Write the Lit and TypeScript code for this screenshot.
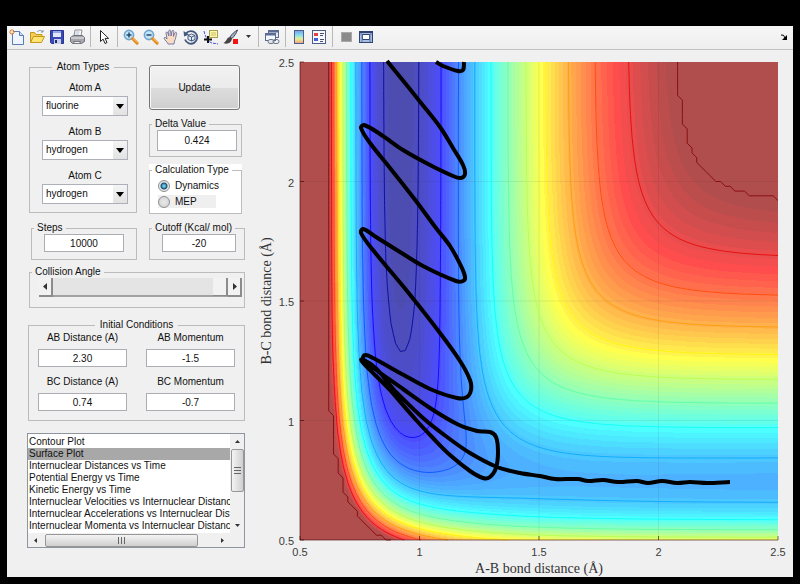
import { LitElement, html, svg, css, TemplateResult } from "lit";
import { customElement, state } from "lit/decorators.js";

/* ---------- Potential energy surface (LEPS, collinear F + H2) ---------- */

type Bond = { d: number; beta: number; re: number };
const HF: Bond = { d: 141.2, beta: 2.203, re: 0.917 };
const HH: Bond = { d: 109.5, beta: 1.942, re: 0.7419 };
const DELTA = 0.424;

const SIZE = 478;
const R_MIN = 0.5;
const R_MAX = 2.5;
const GRID = 101;
const CUTOFF = -20;
const PLATEAU = -22;
const V_MIN = -141;

function integrals(b: Bond, r: number): [number, number] {
  const s = DELTA * DELTA;
  const e = Math.exp(-b.beta * (r - b.re));
  const k = b.d / (4 * (1 + s));
  return [
    k * ((3 + s) * e * e - (2 + 6 * s) * e),
    k * ((1 + 3 * s) * e * e - (6 + 2 * s) * e),
  ];
}

function energy(ab: number, bc: number): number {
  const [q1, j1] = integrals(HF, ab);
  const [q2, j2] = integrals(HH, bc);
  const [q3, j3] = integrals(HF, ab + bc);
  const root = Math.sqrt(((j1 - j2) ** 2 + (j2 - j3) ** 2 + (j3 - j1) ** 2) / 2);
  const v = q1 + q2 + q3 - root;
  return v > PLATEAU ? CUTOFF : v;
}

const surface: number[][] = Array.from({ length: GRID }, (_, row) =>
  Array.from({ length: GRID }, (_, col) =>
    energy(
      R_MIN + ((R_MAX - R_MIN) * col) / (GRID - 1),
      R_MAX - ((R_MAX - R_MIN) * row) / (GRID - 1),
    ),
  ),
);

/* Traces {V >= level}. With closed = true the region is sealed along the frame. */
function trace(level: number, closed: boolean): string {
  const lo = closed ? -1 : 0;
  const hi = closed ? GRID : GRID - 1;
  const clamp = (n: number) => Math.max(0, Math.min(GRID - 1, n));
  const inside = (r: number, c: number) =>
    r >= 0 && c >= 0 && r < GRID && c < GRID && surface[r][c] >= level;
  const value = (r: number, c: number) =>
    r >= 0 && c >= 0 && r < GRID && c < GRID ? surface[r][c] : -1e6;
  const step = SIZE / (GRID - 1);
  const next = new Map<string, string>();
  const points = new Map<string, string>();
  const ends = new Set<string>();

  for (let r = lo; r < hi; r++) {
    for (let c = lo; c < hi; c++) {
      const ring = [[r, c], [r, c + 1], [r + 1, c + 1], [r + 1, c]];
      const flags = ring.map(([a, b]) => inside(a, b));
      if (flags.every(Boolean) || !flags.some(Boolean)) continue;
      const key = (i: number) => {
        const p = ring[i];
        const q = ring[(i + 1) % 4];
        const [m, n] = p[0] < q[0] || p[1] < q[1] ? [p, q] : [q, p];
        const id = `${m}|${n}`;
        if (!points.has(id)) {
          const vm = value(m[0], m[1]);
          const vn = value(n[0], n[1]);
          const t = (level - vm) / (vn - vm);
          const y = clamp(m[0]) + t * (clamp(n[0]) - clamp(m[0]));
          const x = clamp(m[1]) + t * (clamp(n[1]) - clamp(m[1]));
          points.set(id, `${(x * step).toFixed(1)} ${(y * step).toFixed(1)}`);
        }
        return id;
      };
      for (let i = 0; i < 4; i++) {
        if (flags[i] && !flags[(i + 1) % 4]) {
          let k = (i + 1) % 4;
          while (!(!flags[k] && flags[(k + 1) % 4])) k = (k + 1) % 4;
          const to = key(k);
          next.set(key(i), to);
          ends.add(to);
        }
      }
    }
  }

  let path = "";
  const walk = (start: string) => {
    let at: string | undefined = start;
    path += `M${points.get(start)}`;
    while (at !== undefined && next.has(at)) {
      const to: string = next.get(at)!;
      next.delete(at);
      path += `L${points.get(to)}`;
      at = to;
    }
  };
  for (const k of [...next.keys()]) if (!ends.has(k)) walk(k);
  for (const k of [...next.keys()]) if (next.has(k)) walk(k);
  return path;
}

function jet(t: number): number[] {
  const ch = (centre: number) =>
    Math.max(0, Math.min(1, 1.5 - Math.abs(4 * t - centre)));
  return [ch(3), ch(2), ch(1)];
}
const rgb = (c: number[], white: number) =>
  `rgb(${c.map((v) => Math.round(255 * (v * (1 - white) + white))).join(",")})`;

const BANDS = 64;
const bands = Array.from({ length: BANDS }, (_, i) => ({
  d: trace(i === BANDS - 1 ? CUTOFF : V_MIN + ((i + 1) * (CUTOFF - V_MIN)) / BANDS, true),
  fill: rgb(jet(Math.min(0.985, (i + 2) / BANDS)), 0.3),
}));

const contours = Array.from({ length: 12 }, (_, k) => {
  const level = k === 0 ? CUTOFF : -(21.9 + 10.5 * k);
  return { d: trace(level, false), stroke: rgb(jet((level - V_MIN) / (CUTOFF - V_MIN)), 0) };
});

/* ---------- Trajectory ---------- */

const paths: number[][][] = [
  [[136, 0], [143, 4], [158, 9], [163, 8], [164, 0]],
  [
    [87, -1], [105, 21], [121, 41], [140, 65], [153, 86], [163, 103], [165, 112],
    [161, 116], [153, 114], [130, 103], [103, 88], [80, 72], [64, 63], [61, 66],
    [70, 81], [90, 106], [116, 139], [136, 166], [150, 184], [161, 204], [165, 215],
    [163, 219], [156, 219], [123, 204], [100, 190], [76, 175], [63, 167], [61, 171],
    [73, 188], [107, 229], [140, 271], [160, 299], [170, 318], [171, 328], [167, 335],
    [157, 336], [130, 327], [100, 311], [73, 296], [65, 293], [63, 297], [68, 302],
    [103, 327], [130, 346], [157, 362], [177, 369], [190, 370], [196, 375], [198, 390],
    [196, 406], [190, 415], [183, 416], [170, 409], [150, 393], [133, 376], [117, 359],
    [90, 328], [64, 298], [97, 331], [123, 356], [147, 375], [170, 391], [197, 405],
    [220, 411], [240, 414], [255, 417], [278, 417], [288, 419], [303, 418], [318, 420],
    [337, 419], [348, 421], [362, 419], [377, 421], [390, 420], [407, 421], [430, 420],
  ],
];

function smooth(p: number[][]): string {
  let d = `M${p[0].join(" ")}`;
  for (let i = 0; i < p.length - 1; i++) {
    const a = p[Math.max(0, i - 1)];
    const b = p[i];
    const c = p[i + 1];
    const e = p[Math.min(p.length - 1, i + 2)];
    const len = Math.hypot(c[0] - b[0], c[1] - b[1]);
    const tangent = (u: number[], v: number[]) => {
      const l = Math.hypot(v[0] - u[0], v[1] - u[1]) || 1;
      return [((v[0] - u[0]) / l) * (len / 3), ((v[1] - u[1]) / l) * (len / 3)];
    };
    const t1 = tangent(a, c);
    const t2 = tangent(b, e);
    d += `C${[b[0] + t1[0], b[1] + t1[1], c[0] - t2[0], c[1] - t2[1], c[0], c[1]]
      .map((n) => n.toFixed(1))
      .join(" ")}`;
  }
  return d;
}

const ticks = [0.5, 1, 1.5, 2, 2.5].map((v) => ({ v, at: ((v - R_MIN) / 2) * SIZE }));

@customElement("energy-plot")
export class EnergyPlot extends LitElement {
  static styles = css`
    :host { display: block; }
    svg { display: block; width: 100%; height: auto; }
    .tick { font: 11px "Liberation Sans", Arial, sans-serif; fill: #3c3c3c; }
    .axis { font: 14px "Liberation Serif", "Times New Roman", serif; fill: #333; }
    .contour { fill: none; stroke-width: 1; opacity: 0.8; }
    .grid { stroke: #262626; opacity: 0.08; }
    .frame { stroke: #400000; fill: none; opacity: 0.6; }
    .path { fill: none; stroke: #000; stroke-width: 4; stroke-linejoin: round; }
    .band { shape-rendering: crispEdges; }
  `;

  render() {
    return html`
      <svg viewBox="-53 -12 546 527" role="img" aria-label="Potential energy surface with trajectory">
        <rect width=${SIZE} height=${SIZE} fill=${rgb([0, 0, 0.5625], 0.3)}></rect>
        ${bands.map((b) => svg`<path class="band" d=${b.d} fill=${b.fill} fill-rule="evenodd"></path>`)}
        ${ticks.slice(1, 4).map(
          (t) => svg`<path class="grid" d="M${t.at} 0V${SIZE}M0 ${SIZE - t.at}H${SIZE}"></path>`,
        )}
        ${contours.map((c) => svg`<path class="contour" d=${c.d} stroke=${c.stroke}></path>`)}
        <path class="frame" d="M0 0V478M0 478H478"></path>
        ${ticks.map(
          (t) => svg`<path class="frame" d="M${t.at} 478v-4M0 ${SIZE - t.at}h4"></path>
            <text class="tick" x=${t.at} y="494" text-anchor="middle">${t.v}</text>
            <text class="tick" x="-6" y=${SIZE - t.at + 5} text-anchor="end">${t.v}</text>`,
        )}
        ${paths.map((p) => svg`<path class="path" d=${smooth(p)}></path>`)}
        <text class="axis" x="239" y="511" text-anchor="middle">A-B bond distance (Å)</text>
        <text class="axis" transform="translate(-29 239) rotate(-90)" text-anchor="middle">B-C bond distance (Å)</text>
      </svg>
    `;
  }
}

/* ---------- Toolbar ---------- */

const handle = svg`<path d="M9.5 9.5l4.6 4.6" stroke="#e08a1e" stroke-width="3" stroke-linecap="round"></path><path d="M10 9.3l4.4 4.4" stroke="#ffc56b" stroke-width="1"></path>`;
const lens = svg`<circle cx="6" cy="6" r="4.6" fill="#c4e4f8" stroke="#6fa5cf" stroke-width="1.6"></circle>`;

const icons: Record<string, TemplateResult> = {
  "New Figure": svg`<path d="M3.5 2.500h7l4 4v9h-11z" fill="#eef5ff" stroke="#5a7cb4"></path><path d="M10.500 2.500v4h4" fill="#c9dcf5" stroke="#5a7cb4"></path><path d="M3 0v6M0 3h6M1 1l4 4M5 1l-4 4" stroke="#e0763a" stroke-width="1"></path><circle cx="3" cy="3" r="1.200" fill="#ffe9a0"></circle>`,
  "Open File": svg`<path d="M1.500 13.500v-10h4l1.500 2h6v3" fill="#f3cd55" stroke="#c4971d"></path><path d="M1.500 13.500l3-6h11l-3 6z" fill="#ffe373" stroke="#c4971d"></path><path d="M8 3c2-2 4-2 6 0m0-2v2h-2" fill="none" stroke="#7b93b5"></path>`,
  "Save Figure": svg`<path d="M1.500 1.500h13v13h-12l-1-1z" fill="#3a49b5" stroke="#2b3590"></path><rect x="4" y="2" width="8" height="6" fill="#dfe7f8"></rect><rect x="4" y="2" width="8" height="2" fill="#91a8e6"></rect><rect x="5" y="10" width="7" height="5" fill="#cbd1e4"></rect><rect x="6" y="11" width="2" height="3" fill="#20287a"></rect>`,
  "Print Figure": svg`<path d="M5 7l1-6h7l-1 6z" fill="#fff" stroke="#8d8d8d"></path><path d="M6.500 3h4M6.300 5h4" stroke="#a9bbd6"></path><path d="M1.500 8.500l3-2h9l2 2v4l-3 2h-9l-2-2z" fill="#a4a7ad" stroke="#6e7074"></path><path d="M2 9h13" stroke="#eee"></path><path d="M4.500 12.500h7l-1 2h-5z" fill="#f6f6f6" stroke="#77797c"></path>`,
  "Edit Plot": svg`<path d="M4.500 1.500v11l2.600-2.400 1.900 4.400 2-.9-1.900-4.200h3.500z" fill="#fff" stroke="#222"></path>`,
  "Zoom In": svg`${lens}${handle}<path d="M3.500 6h5M6 3.500v5" stroke="#27496f" stroke-width="1.500"></path>`,
  "Zoom Out": svg`${lens}${handle}<path d="M3.500 6h5" stroke="#27496f" stroke-width="1.500"></path>`,
  Pan: svg`<path d="M5 15c-.5-2-3.500-4-4-6 .5-1.200 2-.5 3 1L3 4c0-1.400 1.500-1.400 1.900 0l1 3-.2-5c.2-1.300 1.700-1.300 1.900 0l.5 5 .9-5c.4-1.200 1.800-.9 1.800.4l-.4 5 1.600-3.600c.6-1 1.900-.5 1.600.8-.7 3-1 5.500-2.100 7.400l-.5 3z" fill="#fbdcc0" stroke="#6a6fa8" stroke-width=".9"></path>`,
  "Rotate 3D": svg`<path d="M3 4.500a6.300 6.300 0 1 1-1 6" fill="none" stroke="#44597f" stroke-width="1.800"></path><path d="M.5 2l.6 5.600 5-2z" fill="#44597f"></path><path d="M5 6.500l3.500-1.500L12 6.500v4L8.500 12 5 10.500zM5 6.500L8.500 8 12 6.500M8.500 8v4" fill="#dfe8f5" stroke="#44597f"></path>`,
  "Data Cursor": svg`<rect x="6.500" y="1.500" width="8" height="7" fill="#fbf6a9" stroke="#a79f52"></rect><path d="M8 4h5M8 6h5" stroke="#c9c06b"></path><path d="M1 2c1 5 3 9 6 11s5 1 8 2" fill="none" stroke="#4652e0" stroke-dasharray="3 1"></path><path d="M5 7v7M1 10.500h8" stroke="#111" stroke-width="2"></path>`,
  Brush: svg`<path d="M14.500 1c-3 1.500-6 4.500-7.500 7l2 1.500c2.500-2.500 4.500-5.500 5.500-8.500z" fill="#9fb2c8" stroke="#445"></path><path d="M7 8c-3 0-3 4-6.500 6 3 1.500 8 .5 8.500-4.500z" fill="#454545"></path><rect x="10" y="10" width="5" height="5" fill="#f01414"></rect>`,
  "Link Plot": svg`<rect x="4.500" y="1.500" width="10" height="7" fill="#e4ecf7" stroke="#5a6c93"></rect><path d="M4 2.500h11" stroke="#5a6c93" stroke-width="2"></path><rect x="1.500" y="4.500" width="10" height="7" fill="#f4f8fd" stroke="#5a6c93"></rect><path d="M1 5.500h11" stroke="#5a6c93" stroke-width="2"></path><rect x="4" y="10.500" width="6" height="4" rx="2" fill="#dfe4ea" stroke="#6b7788"></rect><rect x="9" y="10.500" width="6" height="4" rx="2" fill="none" stroke="#6b7788"></rect>`,
  "Insert Colorbar": svg`<defs><linearGradient id="cb" x2="0" y2="1"><stop stop-color="#7f9be8"></stop><stop offset=".35" stop-color="#83dff0"></stop><stop offset=".65" stop-color="#e9ee92"></stop><stop offset="1" stop-color="#f19a7c"></stop></linearGradient></defs><rect x="3.500" y="1.500" width="9" height="13" fill="url(#cb)" stroke="#4c5f8c"></rect>`,
  "Insert Legend": svg`<rect x="1.500" y="1.500" width="13" height="13" fill="#f7f9fd" stroke="#4c5f8c"></rect><rect x="3" y="4" width="4" height="3" fill="#e0443c"></rect><rect x="3" y="9" width="4" height="3" fill="#4060d8"></rect><path d="M9 4.500h4M9 6.500h3M9 10.500h4M9 12.500h3" stroke="#47506a"></path>`,
  "Hide Plot Tools": svg`<rect x="3.500" y="3.500" width="10" height="9" fill="#8b8b8b" stroke="#a9a9a9"></rect>`,
  "Show Plot Tools": svg`<rect x="1.500" y="2.500" width="13" height="11" fill="#a9bde0" stroke="#2f4470"></rect><rect x="4.500" y="5.500" width="7" height="5" fill="#fff" stroke="#2f4470"></rect><path d="M1 3h14" stroke="#2f4470" stroke-width="2"></path><path d="M2 5h2v8M14 5h-2v8" stroke="#5f7bb0"></path>`,
};

const groups: string[][] = [
  ["New Figure", "Open File", "Save Figure", "Print Figure"],
  ["Edit Plot"],
  ["Zoom In", "Zoom Out", "Pan", "Rotate 3D", "Data Cursor", "Brush"],
  ["Link Plot"],
  ["Insert Colorbar", "Insert Legend"],
  ["Hide Plot Tools", "Show Plot Tools"],
];

@customElement("figure-toolbar")
export class FigureToolbar extends LitElement {
  static styles = css`
    :host {
      display: flex;
      height: 24px;
      box-sizing: border-box;
      padding: 0 3px 2px 0;
      background: linear-gradient(#f7f7f7, #eeeeee);
      border-bottom: 1px solid #c3c3c3;
    }
    .group { display: flex; }
    .group + .group { border-left: 1px solid #b9b9b9; margin-left: 3px; padding-left: 3px; }
    button { border: 0; padding: 0; background: none; width: 20px; display: grid; place-items: center; }
    svg { display: block; fill: none; }
    .more { width: 14px; }
    .dock { margin-left: auto; width: 12px; }
  `;

  render() {
    return html`
      ${groups.map(
        (names) => html`<div class="group">
          ${names.map(
            (n) => html`<button title=${n} aria-label=${n}>
              <svg width="16" height="16" viewBox="0 0 16 16">${icons[n]}</svg>
            </button>`,
          )}
          ${names.includes("Brush")
            ? html`<button class="more" aria-label="Brush colour">
                <svg width="5" height="3"><path d="M0 0h5L2.500 3z" fill="#333"></path></svg>
              </button>`
            : ""}
        </div>`,
      )}
      <button class="dock" aria-label="Dock figure">
        <svg width="8" height="8"><path d="M1 2q3-1 4 3" stroke="#000"></path><path d="M7 2v5H2z" fill="#000"></path></svg>
      </button>
    `;
  }
}

/* ---------- Controls and window ---------- */

const atoms = ["fluorine", "hydrogen", "chlorine", "deuterium"];
const plots = [
  "Contour Plot",
  "Surface Plot",
  "Internuclear Distances vs Time",
  "Potential Energy vs Time",
  "Kinetic Energy vs Time",
  "Internuclear Velocities vs Internuclear Distance",
  "Internuclear Accelerations vs Internuclear Distance",
  "Internuclear Momenta vs Internuclear Distance",
];

@customElement("app-root")
export class AppRoot extends LitElement {
  @state() private mode = "Dynamics";

  static styles = css`
    :host {
      display: block;
      box-sizing: border-box;
      min-height: 100vh;
      padding: 26px 7px 7px;
      background: #000;
      color: #111;
      font: 10px/12px "Liberation Sans", Arial, sans-serif;
    }
    .window { background: #f0f0f0; }
    .body { display: grid; grid-template-columns: 240px minmax(0, 1fr); }
    .panel { padding: 11px 2px 0 20px; }
    .pair { display: grid; grid-template-columns: 108px 96px; column-gap: 12px; margin-left: 2px; }
    .stack { display: flex; flex-direction: column; padding-top: 4px; }
    input, select, button { font: inherit; color: inherit; box-sizing: border-box; margin: 0; border-radius: 0; }
    fieldset { margin: 0; min-width: 0; box-sizing: border-box; border: 1px solid #bcbcbc; padding: 0; }
    legend { padding: 0 3px; margin-left: 2px; white-space: nowrap; }
    .centred { margin: 0 auto; padding: 0 5px; }

    .atoms { height: 152px; padding-top: 9px; }
    .atom { display: grid; row-gap: 2px; height: 44px; margin: 0 8px 0 12px; align-content: start; text-align: center; position: relative; }
    .atom select {
      appearance: none;
      height: 20px;
      width: 100%;
      padding: 0 3px;
      background: #fff;
      border: 1px solid #adb0b8;
    }
    .atom::after {
      content: "";
      position: absolute;
      right: 1px;
      top: 15px;
      width: 14px;
      height: 18px;
      pointer-events: none;
      background: linear-gradient(#f4f4f4, #e2e2e2);
    }
    .arrow { position: absolute; right: 4px; top: 22px; z-index: 1; pointer-events: none; }

    .update {
      height: 45px;
      width: 91px;
      border: 1px solid #767676;
      border-radius: 3px;
      background: linear-gradient(#f2f2f2, #ebebeb 50%, #dddddd 50%, #cfcfcf);
      box-shadow: inset 0 0 0 1px #f8f8f8;
    }
    .text { height: 20px; border: 1px solid #abadb3; background: #fff; text-align: center; padding: 0; width: 80px; display: block; }
    .delta { margin-top: 8px; height: 39px; width: 93px; }
    .delta .text { height: 21px; margin-left: 7px; }
    .calc { margin-top: 7px; height: 50px; background: #fff; width: 93px; }
    .calc fieldset { height: 50px; }
    .radio { display: flex; align-items: center; gap: 5px; height: 13px; margin: 3px 0 0 8px; width: 58px; }
    .radio + .radio { background: #efefef; }
    .radio input {
      appearance: none;
      flex: none;
      width: 12px;
      height: 12px;
      border: 1px solid #8e8f8f;
      border-radius: 50%;
      background: radial-gradient(#e9e9e9, #cfcfcf);
    }
    .radio input:checked { background: radial-gradient(circle, #6fc3ee 0 1px, #17506f 3px, #e8e8e8 4px); }
    .small { margin-top: 8px; height: 38px; }
    .small .text { margin-left: 12px; }
    .steps { margin-left: 2px; }
    .cutoff .text { width: 74px; }
    .small .text, .initial .text { height: 18px; }

    .angle { margin: 6px 0 0 2px; height: 42px; }
    .slider { display: flex; height: 19px; margin: 0 2px 0 9px; }
    .slider button {
      width: 14px;
      flex: none;
      padding: 0;
      border: solid #8c8c8c;
      border-width: 0 2px 2px 0;
      background: #f2f2f2;
      display: grid;
      place-items: center;
    }
    .slider input {
      appearance: none;
      flex: 1;
      min-width: 0;
      height: 19px;
      background: #e4e4e4;
      border-bottom: 2px solid #a2a2a2;
    }
    .slider input::-webkit-slider-thumb {
      appearance: none;
      width: 15px;
      height: 18px;
      background: #f2f2f2;
      border: solid #8c8c8c;
      border-width: 0 2px 1px 0;
    }

    .initial { margin: 11px 0 0 1px; height: 102px; padding: 1px 9px 0; }
    .fields { display: grid; grid-template-columns: 89px 89px; column-gap: 19px; row-gap: 9px; }
    .fields label { display: grid; row-gap: 5px; text-align: center; }
    .fields .text { width: 100%; }

    .list {
      display: grid;
      grid-template-columns: minmax(0, 1fr) 14px;
      grid-template-rows: 99px 14px;
      margin-top: 12px;
      border: 1px solid #8f959f;
      background: #fff;
    }
    .list select {
      appearance: none;
      display: block;
      width: 100%;
      height: 99px;
      border: 0;
      padding: 2px 0 0;
      outline: 0;
      background: #fff;
      overflow: hidden;
      scrollbar-width: none;
    }
    .list option { padding: 0 1px; line-height: 12px; height: 12px; min-height: 12px; white-space: pre; }
    .list option:checked { background: linear-gradient(#a8a8a8, #a8a8a8); color: #111; }
    .bar { display: flex; align-items: center; justify-content: space-between; background: #f0f0f0; }
    .bar button { border: 0; background: none; padding: 0; width: 15px; height: 15px; display: grid; place-items: center; }
    .vertical { flex-direction: column; }
    .knob { border: 1px solid #979797; border-radius: 2px; display: grid; place-items: center; box-sizing: border-box; }
    .vertical .knob { width: 13px; height: 43px; margin-bottom: 26px; background: linear-gradient(90deg, #f4f4f4, #cfcfcf); }
    .flat .knob { width: 153px; height: 13px; margin-right: 16px; background: linear-gradient(#f4f4f4, #cfcfcf); }
    .corner { background: #f0f0f0; }
    svg { display: block; }
  `;

  private atom(name: string, value: string) {
    return html`<label class="atom">
      <span>${name}</span>
      <select>
        ${atoms.map((a) => html`<option ?selected=${a === value}>${a}</option>`)}
      </select>
      <svg class="arrow" width="8" height="5"><path d="M0 0h8L4 5z"></path></svg>
    </label>`;
  }

  private field(name: string, value: string) {
    return html`<label><span>${name}</span><input class="text" .value=${value} /></label>`;
  }

  private radio(name: string) {
    return html`<label class="radio">
      <input type="radio" name="calc" .checked=${this.mode === name} @change=${() => (this.mode = name)} />
      ${name}
    </label>`;
  }

  private arrow(label: string, d: string) {
    return html`<button aria-label=${label}>
      <svg width="7" height="7" viewBox="0 0 7 7"><path d=${d} fill="#333"></path></svg>
    </button>`;
  }

  render() {
    return html`
      <main class="window">
        <figure-toolbar></figure-toolbar>
        <div class="body">
          <section class="panel">
            <div class="pair">
              <fieldset class="atoms">
                <legend class="centred">Atom Types</legend>
                ${this.atom("Atom A", "fluorine")}
                ${this.atom("Atom B", "hydrogen")}
                ${this.atom("Atom C", "hydrogen")}
              </fieldset>
              <div class="stack">
                <button class="update">Update</button>
                <fieldset class="delta">
                  <legend>Delta Value</legend>
                  <input class="text" aria-label="Delta Value" value="0.424" />
                </fieldset>
                <div class="calc">
                  <fieldset>
                    <legend>Calculation Type</legend>
                    ${this.radio("Dynamics")} ${this.radio("MEP")}
                  </fieldset>
                </div>
              </div>
              <fieldset class="small steps">
                <legend>Steps</legend>
                <input class="text" aria-label="Steps" value="10000" />
              </fieldset>
              <fieldset class="small cutoff">
                <legend>Cutoff (Kcal/ mol)</legend>
                <input class="text" aria-label="Cutoff (Kcal/ mol)" value="-20" />
              </fieldset>
            </div>
            <fieldset class="angle">
              <legend>Collision Angle</legend>
              <div class="slider">
                ${this.arrow("Decrease angle", "M5 0v7L1 3.500z")}
                <input type="range" min="0" max="180" value="180" aria-label="Collision Angle" />
                ${this.arrow("Increase angle", "M2 0v7l4-3.500z")}
              </div>
            </fieldset>
            <fieldset class="initial">
              <legend class="centred">Initial Conditions</legend>
              <div class="fields">
                ${this.field("AB Distance (A)", "2.30")} ${this.field("AB Momentum", "-1.5")}
                ${this.field("BC Distance (A)", "0.74")} ${this.field("BC Momentum", "-0.7")}
              </div>
            </fieldset>
            <div class="list">
              <select size="8" aria-label="Plot type">
                ${plots.map((p, i) => html`<option ?selected=${i === 1}>${p}</option>`)}
              </select>
              <div class="bar vertical">
                ${this.arrow("Scroll up", "M1 5h5L3.500 2z")}
                <div class="knob"><svg width="7" height="7"><path d="M0 .5h7M0 3.500h7M0 6.500h7" stroke="#666"></path></svg></div>
                ${this.arrow("Scroll down", "M1 2h5L3.500 5z")}
              </div>
              <div class="bar flat">
                ${this.arrow("Scroll left", "M5 1v5L2 3.500z")}
                <div class="knob"><svg width="7" height="7"><path d="M.5 0v7M3.500 0v7M6.500 0v7" stroke="#666"></path></svg></div>
                ${this.arrow("Scroll right", "M2 1v5l3-2.500z")}
              </div>
              <div class="corner"></div>
            </div>
          </section>
          <energy-plot></energy-plot>
        </div>
      </main>
    `;
  }
}
